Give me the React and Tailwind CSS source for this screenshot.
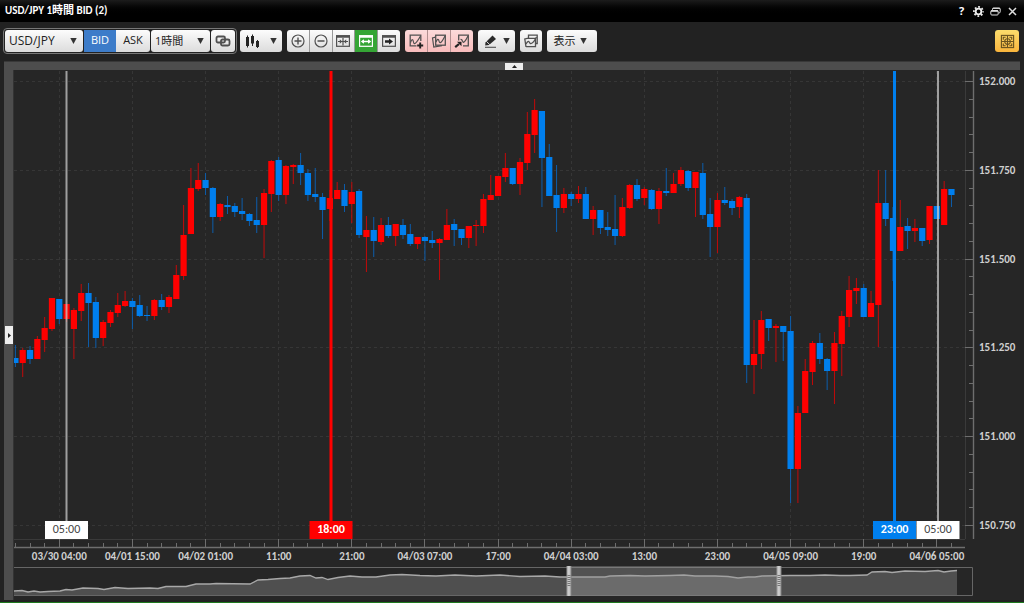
import React from "react";

const STEP = 7.313;
const FIRST_X = 15.4;

// [up/down, body top, body bottom, wick top, wick bottom]
const CANDLES = [
  ["d", 358, 363, 345, 367], ["u", 350, 363, 348, 377], ["d", 350, 359, 346, 364], ["u", 339, 359, 336, 359],
  ["u", 328, 340, 317, 352], ["u", 298, 329, 298, 331], ["d", 299, 319, 299, 324], ["u", 304, 319, 304, 322],
  ["u", 310, 329, 308, 359], ["u", 293, 311, 284, 321], ["d", 293, 303, 283, 347], ["d", 302, 338, 297, 348],
  ["u", 322, 338, 320, 346], ["u", 312, 323, 310, 327], ["u", 305, 313, 293, 317], ["u", 301, 306, 291, 307],
  ["d", 301, 307, 298, 329], ["d", 305, 316, 295, 317], ["d", 315, 316, 306, 321], ["u", 300, 316, 299, 320],
  ["d", 300, 307, 294, 310], ["u", 297, 307, 295, 313], ["u", 275, 299, 265, 299], ["u", 235, 276, 205, 280],
  ["u", 188, 234, 168, 234], ["u", 180, 189, 163, 191], ["d", 180, 188, 173, 195], ["d", 188, 217, 187, 233],
  ["u", 204, 217, 203, 221], ["d", 205, 207, 196, 214], ["d", 206, 212, 203, 217], ["d", 211, 214, 198, 220],
  ["d", 214, 221, 213, 226], ["d", 220, 225, 197, 233], ["u", 193, 225, 189, 258], ["u", 161, 194, 160, 212],
  ["d", 160, 195, 157, 201], ["u", 166, 195, 165, 204], ["u", 165, 167, 164, 184], ["d", 165, 173, 153, 185],
  ["d", 173, 195, 169, 201], ["d", 194, 197, 168, 202], ["d", 197, 210, 193, 239], ["u", 198, 209, 190, 221],
  ["u", 190, 199, 182, 199], ["d", 190, 206, 184, 212], ["u", 192, 204, 182, 223], ["d", 191, 235, 189, 238],
  ["u", 230, 237, 216, 272], ["d", 230, 241, 217, 257], ["u", 225, 242, 218, 245], ["d", 225, 236, 217, 238],
  ["u", 224, 236, 224, 246], ["d", 225, 235, 219, 239], ["d", 234, 244, 224, 246], ["u", 237, 244, 237, 249],
  ["d", 237, 241, 236, 261], ["d", 240, 243, 231, 248], ["u", 239, 243, 238, 280], ["u", 225, 240, 209, 240],
  ["d", 224, 230, 219, 246], ["d", 229, 238, 229, 245], ["u", 226, 238, 226, 248], ["u", 225, 226, 220, 246],
  ["u", 199, 226, 194, 233], ["u", 195, 200, 175, 200], ["u", 176, 196, 176, 196], ["u", 168, 177, 153, 182],
  ["d", 168, 184, 168, 185], ["u", 162, 184, 158, 195], ["u", 134, 163, 112, 170], ["u", 110, 135, 99, 153],
  ["d", 111, 158, 111, 207], ["d", 157, 196, 144, 196], ["d", 195, 208, 165, 232], ["u", 194, 208, 188, 213],
  ["d", 194, 199, 192, 206], ["u", 194, 199, 186, 203], ["d", 194, 219, 187, 219], ["u", 210, 219, 206, 235],
  ["d", 210, 228, 210, 234], ["d", 227, 230, 212, 236], ["d", 229, 236, 195, 245], ["u", 207, 236, 198, 237],
  ["u", 185, 208, 184, 209], ["d", 185, 199, 179, 201], ["u", 189, 198, 187, 205], ["d", 190, 209, 189, 210],
  ["u", 191, 209, 188, 224], ["d", 191, 193, 168, 196], ["u", 184, 193, 173, 193], ["u", 170, 184, 167, 186],
  ["d", 171, 188, 170, 191], ["u", 172, 188, 172, 217], ["d", 173, 215, 163, 219], ["d", 214, 227, 198, 257],
  ["u", 200, 227, 193, 253], ["d", 200, 203, 187, 205], ["d", 201, 208, 199, 215], ["u", 197, 207, 196, 218],
  ["d", 198, 365, 194, 383], ["u", 354, 365, 320, 394], ["u", 320, 354, 311, 369], ["d", 319, 328, 319, 341],
  ["u", 326, 328, 324, 362], ["d", 326, 332, 326, 361], ["d", 331, 469, 316, 503], ["u", 413, 469, 406, 503],
  ["u", 371, 413, 359, 413], ["u", 343, 372, 341, 385], ["d", 343, 359, 333, 364], ["d", 359, 371, 358, 390],
  ["u", 343, 371, 332, 404], ["u", 316, 344, 311, 376], ["u", 290, 317, 276, 327], ["u", 288, 291, 278, 304],
  ["d", 288, 317, 284, 317], ["u", 303, 317, 291, 317], ["u", 203, 305, 170, 347], ["d", 203, 219, 170, 226],
  ["d", 218, 251, 207, 281], ["u", 227, 251, 200, 251], ["d", 226, 231, 218, 249], ["u", 228, 231, 219, 242],
  ["d", 228, 241, 228, 246], ["u", 206, 240, 206, 244], ["d", 206, 219, 206, 219], ["u", 189, 225, 181, 225],
  ["d", 189, 195, 189, 207],
];

const TIMES = [
  "03/30 04:00", "04/01 15:00", "04/02 01:00", "11:00", "21:00", "04/03 07:00", "17:00",
  "04/04 03:00", "13:00", "23:00", "04/05 09:00", "19:00", "04/06 05:00",
];
const PRICES = ["152.000", "151.750", "151.500", "151.250", "151.000", "150.750"];

const timeX = (i) => 59.3 + i * 73.13;
const priceY = (i) => 81.5 + i * 88.75;

const OVERVIEW =
  "14,591 22,590.5 28,592 34,591 40,592 48,591.5 60,591 66,589.5 72,590 83,588 98,588.5 104,589.5 115,587.5 128,588.5 150,588 158,588.5 166,586.5 186,586.5 196,584 210,584 216,583.5 250,584 258,580 268,579.5 280,578.5 290,578 300,576 310,575.5 316,578 322,577.5 328,579.5 338,577.5 350,576 362,577 376,577 390,575 402,574.5 420,575.5 436,576 455,575 476,576 500,575 520,576.5 545,576 560,577 580,577 605,577 610,576 630,575.5 645,576 670,575.5 684,575 695,576 715,576 728,576.5 738,578 748,577 755,577 762,576 790,575.5 810,575.5 825,575 840,575.5 850,575.5 867,575 872,572 885,571.5 892,572.5 905,571 925,571.5 938,570.5 944,572 951,571 957,570.5";

function Marker({ x, label, line, width, box, text, bold }) {
  return (
    <g>
      <rect x={x - width / 2} y="71" width={width} height="450" fill={line} />
      <rect x={x - 21.5} y="521" width="43" height="18" fill={box} />
      <text x={x} y="533" textAnchor="middle" fill={text} className={bold ? "text-[12px] font-bold" : "text-[12px] font-normal"}>{label}</text>
    </g>
  );
}

function Grip({ x }) {
  return (
    <g>
      <rect x={x} y="566" width="5" height="30" fill="url(#grip)" />
      {[575, 577, 579, 581, 583, 585].map((y) => (
        <rect key={y} x={x + 1} y={y} width="3" height="1" fill="#777" />
      ))}
    </g>
  );
}

function Chart() {
  return (
    <svg
      viewBox="14 70 1006 530"
      className="block h-auto w-full min-w-0 flex-1 bg-[#262626] font-['Carlito','Lato','Noto_Sans_CJK_JP',sans-serif] text-[11px] font-bold"
      role="img"
      aria-label="USD/JPY"
    >
      <defs>
        <linearGradient id="grip" x1="0" x2="1" y1="0" y2="0">
          <stop offset="0" stopColor="#9a9a9a" />
          <stop offset="0.5" stopColor="#d8d8d8" />
          <stop offset="1" stopColor="#808080" />
        </linearGradient>
        <clipPath id="plot"><rect x="14" y="70" width="951" height="530" /></clipPath>
      </defs>

      <g stroke="#363636" strokeDasharray="3 3">
        {PRICES.map((p, i) => (
          <line key={p} x1="14" x2="965" y1={Math.floor(priceY(i)) + 0.5} y2={Math.floor(priceY(i)) + 0.5} />
        ))}
        {TIMES.map((t, i) => (
          <line key={t} y1="71" y2="539" x1={Math.floor(timeX(i)) + 0.5} x2={Math.floor(timeX(i)) + 0.5} />
        ))}
      </g>
      <path d="M965.5 71V539M14 539.5H965" stroke="#3a3a3a" fill="none" />

      <g clipPath="url(#plot)">
        {CANDLES.map(([dir, top, bottom, high, low], i) => {
          const x = FIRST_X + i * STEP;
          const up = dir === "u";
          return (
            <g key={i}>
              <rect x={x - 0.5} y={high} width="1" height={low - high} fill={up ? "#c20a0a" : "#0d5dab"} />
              <rect x={x - 3.1} y={top} width="6.2" height={Math.max(bottom - top, 1)} fill={up ? "#ff0000" : "#007fee"} />
            </g>
          );
        })}
      </g>

      <g stroke="#6e6e6e" fill="none">
        <path d="M973.5 71V539M14 547.5H965" strokeWidth="1.4" />
        {PRICES.map((p, i) => (
          <line key={p} x1="965" x2="973" y1={Math.floor(priceY(i)) + 0.5} y2={Math.floor(priceY(i)) + 0.5} />
        ))}
        {Array.from({ length: 26 }, (_, i) => (
          <line key={i} x1="969" x2="973" y1={Math.floor(81.5 + i * 17.75) + 0.5} y2={Math.floor(81.5 + i * 17.75) + 0.5} />
        ))}
        {TIMES.map((t, i) => (
          <line key={t} y1="539" y2="547" x1={Math.floor(timeX(i)) + 0.5} x2={Math.floor(timeX(i)) + 0.5} />
        ))}
        {Array.from({ length: 65 }, (_, i) => (
          <line key={i} y1="543" y2="547" x1={Math.floor(15.4 + i * 14.626) + 0.5} x2={Math.floor(15.4 + i * 14.626) + 0.5} />
        ))}
      </g>

      <g fill="#d0d0d0" clipPath="url(#plot)">
        {TIMES.map((t, i) => (
          <text key={t} x={timeX(i)} y="560" textAnchor="middle">{t}</text>
        ))}
      </g>
      <g fill="#d0d0d0">
        {PRICES.map((p, i) => (
          <text key={p} x="979" y={Math.floor(priceY(i)) + 4}>{p}</text>
        ))}
      </g>

      <Marker x={66.5} label="05:00" line="rgba(200,200,200,0.75)" width={2} box="#ffffff" text="#444" />
      <Marker x={331} label="18:00" line="#ff0000" width={3} box="#ff0000" text="#ffffff" bold />
      <Marker x={894.5} label="23:00" line="#007fee" width={3} box="#007fee" text="#ffffff" bold />
      <Marker x={938} label="05:00" line="rgba(200,200,200,0.75)" width={2} box="#ffffff" text="#444" />

      <polygon points={`14,595 ${OVERVIEW} 957,595`} fill="#4f4f4f" />
      <polyline points={OVERVIEW} fill="none" stroke="#a8a8a8" strokeWidth="1.3" />
      <path d="M14 567.5H972.5V595.5H14" fill="none" stroke="#666" />
      <rect x="571" y="566" width="206" height="30" fill="rgba(150,150,150,0.4)" />
      <Grip x={566.5} />
      <Grip x={776.5} />
    </svg>
  );
}

function Icon({ children, size = 16 }) {
  return (
    <svg width={size} height={size} viewBox="0 0 16 16" fill="none" stroke="#505050" strokeWidth="1.4" aria-hidden="true">
      {children}
    </svg>
  );
}

const Caret = () => (
  <svg width="7" height="6" viewBox="0 0 7 6" fill="#333" aria-hidden="true"><path d="M0.3 0H6.7L3.5 6Z" /></svg>
);

const LIGHT = "bg-linear-to-b from-[#fcfcfc] to-[#dcdcdc]";
const PINK = "bg-linear-to-b from-[#fbdada] to-[#f8bcbc]";
const BTN = "flex h-[22px] items-center justify-center text-[#222]";

function Segment({ label, className, children }) {
  return (
    <button type="button" aria-label={label} className={`${BTN} min-w-0 flex-1 ${className}`}>
      {children}
    </button>
  );
}

function Select({ label, value, className }) {
  return (
    <label className={`${BTN} ${LIGHT} relative rounded-[3px] ${className}`}>
      <select aria-label={label} defaultValue={value} className="h-full w-full appearance-none bg-transparent pl-1 outline-none">
        <option>{value}</option>
      </select>
      <span className="pointer-events-none absolute right-[6px]"><Caret /></span>
    </label>
  );
}

const Frame = () => (
  <g><rect x="1.6" y="2.7" width="12.8" height="10.6" strokeWidth="1.2" /><path d="M1 3.6H15" strokeWidth="2.2" /></g>
);

function TitleBar() {
  return (
    <header className="flex h-[22px] items-center justify-between bg-linear-to-b from-[#1c1c1c] to-black to-70% pr-1.5 pl-[5px] text-white">
      <h1 className="font-['Carlito','Lato','Noto_Sans_CJK_JP',sans-serif] text-[11px] font-bold">USD/JPY 1時間 BID (2)</h1>
      <div className="flex items-center gap-[6px] pt-px">
        <button type="button" aria-label="Help" className="w-[11px] font-['Open_Sans',sans-serif] text-[11px] font-bold">?</button>
        <button type="button" aria-label="Settings">
          <svg width="11" height="11" viewBox="0 0 12 12" fill="none" stroke="#eee" aria-hidden="true">
            <circle cx="6" cy="6" r="3.1" strokeWidth="2" />
            <circle cx="6" cy="6" r="5" strokeWidth="1.8" strokeDasharray="2 1.927" strokeDashoffset="1" />
          </svg>
        </button>
        <button type="button" aria-label="Restore">
          <svg width="11" height="11" viewBox="0 0 11 11" fill="none" stroke="#ddd" aria-hidden="true">
            <rect x="0.8" y="4.5" width="7.4" height="4.5" rx="1" />
            <path d="M1 5H8" strokeWidth="1.6" />
            <path d="M2.5 3.8V3Q2.5 2 3.5 2H9Q10.2 2 10.2 3V5.8Q10.2 7 9 7M2.8 2.4H10" />
          </svg>
        </button>
        <button type="button" aria-label="Close">
          <svg width="11" height="11" viewBox="0 0 11 11" stroke="#ddd" strokeWidth="1.5" aria-hidden="true">
            <path d="M2 2L9 9M9 2L2 9" />
          </svg>
        </button>
      </div>
    </header>
  );
}

function Toolbar() {
  return (
    <div className="flex h-[39px] items-center gap-[5px] bg-[#222] pr-[5px] pb-px pl-[3px] font-['Open_Sans','Noto_Sans_CJK_JP',sans-serif] text-xs">
      <div className="-mr-[2px] flex items-center rounded-[4px] border border-[#777] p-px">
        <Select label="Pair" value="USD/JPY" className="w-[78px]" />
        <button type="button" aria-pressed="true" className={`${BTN} ml-px w-[32px] bg-[#3d7cc9] pb-px text-[11px] text-white`}>BID</button>
        <button type="button" aria-pressed="false" className={`${BTN} ${LIGHT} w-[34px] rounded-r-[3px] pb-px text-[11px]`}>ASK</button>
        <Select label="Period" value="1時間" className="ml-px w-[59px] text-[11px]" />
        <button type="button" aria-label="Link" className={`${BTN} ${LIGHT} ml-px w-[24px] rounded-[3px]`}>
          <Icon>
            <rect x="1.5" y="3.5" width="8.5" height="6" rx="1.5" strokeWidth="1.8" />
            <rect x="6" y="6.5" width="8.5" height="6" rx="1.5" strokeWidth="1.8" />
          </Icon>
        </button>
      </div>

      <button type="button" aria-label="Chart type" className={`${BTN} ${LIGHT} w-[42px] gap-[11px] rounded-[3px]`}>
        <svg width="13" height="14" viewBox="0 0 13 14" fill="#222" aria-hidden="true">
          <path d="M0 3H3V12H0ZM1 1.5H2V13.5H1ZM5 2H8V9.5H5ZM6 0.5H7V12H6ZM10 7H13V13H10ZM11 6H12V14H11Z" />
        </svg>
        <Caret />
      </button>

      <div className="flex w-[113px] divide-x divide-[#999] overflow-hidden rounded-[3px]">
        <Segment label="Zoom in" className={LIGHT}>
          <Icon><circle cx="8" cy="8" r="6" strokeWidth="1.2" /><path d="M4.5 8H11.5M8 4.5V11.5" /></Icon>
        </Segment>
        <Segment label="Zoom out" className={LIGHT}>
          <Icon><circle cx="8" cy="8" r="6" strokeWidth="1.2" /><path d="M4.5 8H11.5" /></Icon>
        </Segment>
        <Segment label="Narrow bars" className={LIGHT}>
          <Icon><Frame /><path d="M8 5V12.5" strokeWidth="1.2" /><path d="M3 8.5H13" strokeWidth="1.2" /><path d="M4.8 6.3L7.2 8.5L4.8 10.7ZM11.2 6.3L8.8 8.5L11.2 10.7Z" fill="#505050" stroke="none" /></Icon>
        </Segment>
        <Segment label="Fit bars" className="bg-[#35a535]">
          <svg width="16" height="16" viewBox="0 0 16 16" fill="none" stroke="#fff" strokeWidth="1.4" aria-hidden="true">
            <Frame /><path d="M4 8.5H12" /><path d="M6 6.2L2.8 8.5L6 10.8ZM10 6.2L13.2 8.5L10 10.8Z" fill="#fff" stroke="none" />
          </svg>
        </Segment>
        <Segment label="Latest bar" className={LIGHT}>
          <Icon><Frame /><path d="M4 8.5H9" stroke="#222" strokeWidth="2.4" /><path d="M8 5.5L12 8.5L8 11.5Z" fill="#222" stroke="none" /></Icon>
        </Segment>
      </div>

      <div className="flex w-[68px] divide-x divide-[#b08f8f] overflow-hidden rounded-[3px]">
        <Segment label="Add indicator" className={PINK}>
          <Icon>
            <path d="M12.8 8V2.2H2.2V12.8H8.5" strokeWidth="1.3" /><path d="M2.5 9.5C4 5.5 5 6 5.5 9S8 11 12.5 3" strokeWidth="1.2" />
            <path d="M9.2 12.5H15.2M12.2 9.5V15.5" stroke="#222" strokeWidth="1.9" />
          </Icon>
        </Segment>
        <Segment label="Copy indicator" className={PINK}>
          <Icon>
            <rect x="4.7" y="2.2" width="9.6" height="10" strokeWidth="1.3" /><path d="M4.5 4.2L1.5 5L2.8 14L11 12.6" strokeWidth="1.2" />
            <path d="M5 9C6 6 7.5 5.5 8 8S10 11 14 3" strokeWidth="1.2" />
          </Icon>
        </Segment>
        <Segment label="Indicator to chart" className={PINK}>
          <Icon>
            <path d="M4.7 7.5V2.2H14.3V12.8H9" strokeWidth="1.3" /><path d="M6.5 6.5C8 6 8.5 8 9 9S11 9 14 3" strokeWidth="1.2" />
            <path d="M1.2 14.2L5 11" stroke="#222" strokeWidth="2.2" /><path d="M3 8.8H7.5V13.2Z" fill="#222" stroke="none" />
          </Icon>
        </Segment>
      </div>

      <button type="button" aria-label="Draw" className={`${BTN} ${LIGHT} w-[37px] gap-[4px] rounded-[3px]`}>
        <Icon>
          <path d="M2.5 9.5L9.5 2.5L13 6L6 12L2.2 12.5Z" fill="#2a2a2a" stroke="none" />
          <path d="M3.5 8.5L6.8 11.7" stroke="#eee" strokeWidth="0.9" /><path d="M2 14.3H13" strokeWidth="1.1" />
        </Icon>
        <Caret />
      </button>

      <button type="button" aria-label="Compare" className={`${BTN} ${LIGHT} w-[22px] rounded-[3px]`}>
        <Icon>
          <path d="M5.5 5V2.2H14.2V10.5H12.5" strokeWidth="1.3" /><path d="M3 13.8L1.8 6L4.2 5.3H12.5V13.6H3Z" strokeWidth="1.3" />
          <path d="M3 11C5 7.5 6 8 6.5 9.5S9.5 12 13.5 4" strokeWidth="1.2" />
        </Icon>
      </button>

      <button type="button" className={`${BTN} ${LIGHT} w-[50px] gap-1 rounded-[3px] pr-1 text-[11px]`}>
        表示 <Caret />
      </button>

      <button type="button" aria-label="Crosshair" className={`${BTN} ml-auto w-[24px] rounded-[3px] bg-linear-to-b from-[#fbdc6c] to-[#f9b53c]`}>
        <svg width="15" height="15" viewBox="0 0 16 16" fill="none" stroke="#6a5420" strokeWidth="1.2" aria-hidden="true">
          <rect x="1.5" y="1.5" width="13" height="13" /><path d="M8 1.5V14.5M1.5 8H14.5" />
          <circle cx="8" cy="8" r="3" /><path d="M3.5 6V3.5H6M10 3.5H12.5V6M12.5 10V12.5H10M6 12.5H3.5V10" />
        </svg>
      </button>
    </div>
  );
}

export default function App() {
  return (
    <main className="flex min-h-screen flex-col border-b border-[#1f7a1f] bg-[#222]">
      <TitleBar />
      <Toolbar />
      <div className="mx-1 flex h-[9px] items-center justify-center border-t border-t-[#383838] bg-[#4d4d4d] pl-1">
        <button type="button" aria-label="Collapse toolbar" className="flex h-[7px] w-[18px] items-center justify-center bg-[#eee]">
          <svg width="5" height="3" viewBox="0 0 5 3" fill="#222" aria-hidden="true"><path d="M0 3H5L2.5 0Z" /></svg>
        </button>
      </div>
      <div className="mx-1 flex items-stretch">
        <aside className="flex w-[10px] shrink-0 items-center justify-end border-r border-[#333] bg-[#4d4d4d]">
          <button type="button" aria-label="Open side panel" className="flex h-[18px] w-[8px] items-center justify-center bg-[#eee]">
            <svg width="3" height="5" viewBox="0 0 3 5" fill="#222" aria-hidden="true"><path d="M0 0V5L3 2.5Z" /></svg>
          </button>
        </aside>
        <Chart />
      </div>
    </main>
  );
}
